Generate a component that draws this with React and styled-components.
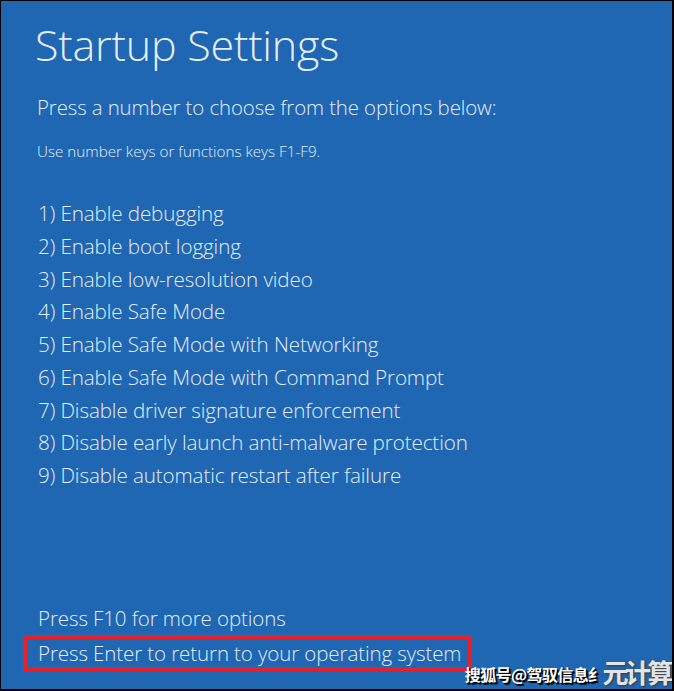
import React from "react";
import styled, { createGlobalStyle } from "styled-components";

const Global = createGlobalStyle`
  html, body { margin: 0; padding: 0; background: #000; }
  body { font-family: "Open Sans", "Noto Sans", sans-serif; }
  * { box-sizing: border-box; }
`;

const Screen = styled.div`
  position: relative;
  width: 674px;
  height: 691px;
  background: #1f67b2;
  border-style: solid;
  border-color: #000;
  border-width: 1px 2px 2px 1px;
  color: #e6edf6;
  font-family: "Open Sans", "Noto Sans", sans-serif;
  font-weight: 300;
  display: flex;
  flex-direction: column;
  padding: 18px 0 0 34px;
  overflow: hidden;
`;

const Title = styled.h1`
  margin: 0;
  font-size: 43px;
  font-weight: 300;
  line-height: 52px;
  letter-spacing: -0.2px;
`;

const Lead = styled.p`
  margin: 22px 0 0 2px;
  font-size: 20.4px;
  line-height: 28px;
  letter-spacing: -0.1px;
`;

const Hint = styled.p`
  margin: 20px 0 0 2px;
  font-size: 15.2px;
  line-height: 20px;
`;

const OptionList = styled.ol`
  list-style: none;
  margin: 36px 0 0 0;
  padding: 0;
  display: flex;
  flex-direction: column;
`;

const Option = styled.li`
  font-size: 20.6px;
  line-height: 32.75px;
  letter-spacing: -0.1px;
  padding-left: 3px;
`;

const Footer = styled.div`
  margin-top: auto;
  margin-bottom: 18px;
  margin-left: -12px;
  display: flex;
  flex-direction: column;
  align-items: flex-start;
  gap: 2px;
`;

const FooterLine = styled.div`
  font-size: 20.5px;
  line-height: 30px;
  letter-spacing: -0.1px;
  padding: 0 0 0 15px;
`;

const Highlighted = styled.div`
  font-size: 20.5px;
  line-height: 28px;
  letter-spacing: -0.1px;
  width: 449px;
  padding: 0 0 0 11px;
  border: 4px solid #e6212c;
`;

const Watermark = styled.div`
  position: absolute;
  right: 2px;
  bottom: 1px;
  display: flex;
  align-items: flex-end;
  font-family: "Noto Sans CJK SC", sans-serif;
  font-weight: 700;
  white-space: nowrap;
`;

const MarkSmall = styled.span`
  font-size: 16px;
  line-height: 22px;
  margin-bottom: 3px;
  color: #fff;
  text-shadow: 1px 1px 0 #000, 2px 2px 1px #000;
  letter-spacing: -0.6px;
`;

const MarkBig = styled.span`
  font-size: 26px;
  line-height: 32px;
  color: #e4e4e4;
  margin-left: -1px;
  text-shadow: 0 0 2px #555, 1px 1px 2px #333;
  letter-spacing: -3.5px;
`;

const options = [
  "1) Enable debugging",
  "2) Enable boot logging",
  "3) Enable low-resolution video",
  "4) Enable Safe Mode",
  "5) Enable Safe Mode with Networking",
  "6) Enable Safe Mode with Command Prompt",
  "7) Disable driver signature enforcement",
  "8) Disable early launch anti-malware protection",
  "9) Disable automatic restart after failure",
];

export default function App() {
  return (
    <>
      <Global />
      <Screen>
        <Title>Startup Settings</Title>
        <Lead>Press a number to choose from the options below:</Lead>
        <Hint>Use number keys or functions keys F1-F9.</Hint>
        <OptionList>
          {options.map((o) => (
            <Option key={o}>{o}</Option>
          ))}
        </OptionList>
        <Footer>
          <FooterLine>Press F10 for more options</FooterLine>
          <Highlighted>Press Enter to return to your operating system</Highlighted>
        </Footer>
        <Watermark>
          <MarkSmall>搜狐号@驾驭信息纟</MarkSmall>
          <MarkBig>元计算</MarkBig>
        </Watermark>
      </Screen>
    </>
  );
}
